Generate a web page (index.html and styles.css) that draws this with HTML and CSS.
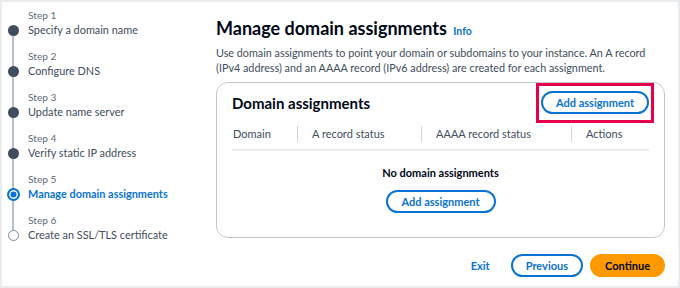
FILE: index.html
```html
<!DOCTYPE html>
<html lang="en">

<head>
    <meta charset="UTF-8">
    <meta name="viewport" content="width=device-width, initial-scale=1.0">
    <title>Manage domain assignments</title>
    <link rel="stylesheet" href="styles.css">
</head>

<body>

    <div class="page">

        <!-- Wizard steps -->
        <ol class="steps">
            <li class="step first done">
                <span class="rail"></span>
                <span class="step-num">Step 1</span>
                <span class="marker"><span class="dot"></span></span>
                <span class="step-title">Specify a domain name</span>
            </li>
            <li class="step done">
                <span class="rail"></span>
                <span class="step-num">Step 2</span>
                <span class="marker"><span class="dot"></span></span>
                <span class="step-title">Configure DNS</span>
            </li>
            <li class="step done">
                <span class="rail"></span>
                <span class="step-num">Step 3</span>
                <span class="marker"><span class="dot"></span></span>
                <span class="step-title">Update name server</span>
            </li>
            <li class="step done">
                <span class="rail"></span>
                <span class="step-num">Step 4</span>
                <span class="marker"><span class="dot"></span></span>
                <span class="step-title">Verify static IP address</span>
            </li>
            <li class="step current">
                <span class="rail"></span>
                <span class="step-num">Step 5</span>
                <span class="marker"><span class="dot"></span></span>
                <span class="step-title">Manage domain assignments</span>
            </li>
            <li class="step last todo">
                <span class="rail"></span>
                <span class="step-num">Step 6</span>
                <span class="marker"><span class="dot"></span></span>
                <span class="step-title">Create an SSL/TLS certificate</span>
            </li>
        </ol>

        <!-- Main content -->
        <main class="content">
            <h1>Manage domain assignments <a class="info" href="#">Info</a></h1>
            <p class="description">Use domain assignments to point your domain or subdomains to your instance. An A record
                (IPv4 address) and an AAAA record (IPv6 address) are created for each assignment.</p>

            <section class="card">
                <div class="card-header">
                    <h2>Domain assignments</h2>
                    <span class="highlight">
                        <button class="btn btn-normal">Add assignment</button>
                    </span>
                </div>

                <div class="table-head">
                    <div class="col">Domain</div>
                    <div class="col">A record status</div>
                    <div class="col">AAAA record status</div>
                    <div class="col">Actions</div>
                </div>

                <div class="empty">
                    <p>No domain assignments</p>
                    <button class="btn btn-normal">Add assignment</button>
                </div>
            </section>

            <div class="actions">
                <a class="exit" href="#">Exit</a>
                <button class="btn btn-normal">Previous</button>
                <button class="btn btn-primary">Continue</button>
            </div>
        </main>

    </div>

</body>

</html>
```

FILE: styles.css
```css
* {
    box-sizing: border-box;
}

html,
body {
    margin: 0;
    height: 100%;
}

body {
    font-family: Lato, "Open Sans", sans-serif;
    color: #414d5c;
    background: #fff;
}

.page {
    display: flex;
    height: 288px;
    border: 2px solid #e9ebed;
}

/* Wizard steps */
.steps {
    list-style: none;
    margin: 0;
    padding: 6px 0 0 0;
    width: 214px;
    flex-shrink: 0;
}

.step {
    display: grid;
    grid-template-columns: 22px 1fr;
    column-gap: 4px;
}

.step .rail {
    grid-column: 1;
    grid-row: 1;
    justify-self: center;
    width: 2px;
    background: #b6bec9;
}

.step.first .rail {
    background: none;
}

.step-num {
    grid-column: 2;
    grid-row: 1;
    padding-top: 11px;
    font-size: 10.2px;
    line-height: 14px;
    color: #5f6b7a;
}

.step.first .step-num {
    padding-top: 0;
}

.marker {
    grid-column: 1;
    grid-row: 2;
    display: flex;
    align-items: center;
    justify-content: center;
    background: linear-gradient(#b6bec9, #b6bec9) center / 2px 100% no-repeat;
}

.step.first .marker {
    background-size: 2px 50%;
    background-position: center bottom;
}

.step.last .marker {
    background-size: 2px 50%;
    background-position: center top;
}

.dot {
    width: 11px;
    height: 11px;
    border-radius: 50%;
    background: #414d5c;
}

.step.current .dot {
    width: 13px;
    height: 13px;
    background: #0972d3;
    border: 2px solid #0972d3;
    box-shadow: inset 0 0 0 1.5px #fff;
}

.step.todo .dot {
    width: 11px;
    height: 11px;
    background: #fff;
    border: 1.5px solid #7d8998;
}

.step-title {
    grid-column: 2;
    grid-row: 2;
    font-size: 10.9px;
    line-height: 16px;
    color: #414d5c;
}

.step.current .step-title {
    color: #0972d3;
    font-weight: 700;
}

/* Main content */
.content {
    flex: 1;
    padding: 14px 13px 0 0;
}

h1 {
    margin: 0;
    font-size: 18px;
    line-height: 24px;
    font-weight: 700;
    color: #000716;
}

.info {
    font-size: 10.5px;
    font-weight: 700;
    color: #0972d3;
    text-decoration: none;
    margin-left: 2px;
}

.description {
    margin: 2px 0 0 0;
    font-size: 10.8px;
    line-height: 15px;
    color: #414d5c;
}

.card {
    margin-top: 7px;
    border: 1.5px solid #c6c6cd;
    border-radius: 12px;
    padding: 8px 15px 24px 15px;
}

.card-header {
    display: flex;
    justify-content: space-between;
    align-items: center;
}

h2 {
    margin: 0;
    font-size: 15px;
    font-weight: 700;
    color: #000716;
}

.highlight {
    position: relative;
}

/* annotation frame drawn over the button */
.highlight::after {
    content: "";
    position: absolute;
    top: -8px;
    bottom: -9px;
    left: -5px;
    right: -5px;
    border: 3px solid #e6004c;
}

.btn {
    font-family: inherit;
    font-size: 11px;
    font-weight: 700;
    height: 23px;
    padding: 0 13px;
    border-radius: 20px;
    white-space: nowrap;
    cursor: pointer;
}

.btn-normal {
    background: #fff;
    color: #0972d3;
    border: 2px solid #0972d3;
}

.btn-primary {
    background: #ff9900;
    color: #000716;
    border: 2px solid #ff9900;
}

.table-head {
    display: grid;
    grid-template-columns: 65px 124px 150px 1fr;
    margin-top: 12px;
    padding-bottom: 7px;
    border-bottom: 2px solid #e9ebed;
    font-size: 11px;
    line-height: 16px;
}

.col {
    padding-left: 1px;
}

.col + .col {
    border-left: 1.5px solid #d1d5db;
    padding-left: 14px;
}

.empty {
    text-align: center;
    padding-top: 15px;
}

.empty p {
    margin: 0 0 11px 0;
    font-size: 11px;
    font-weight: 700;
    color: #000716;
}

.empty .btn {
    width: 110px;
}

.actions {
    display: flex;
    justify-content: flex-end;
    align-items: center;
    gap: 7px;
    margin-top: 16px;
}

.exit {
    font-size: 11px;
    font-weight: 700;
    color: #0972d3;
    text-decoration: none;
    margin-right: 14px;
}
```
